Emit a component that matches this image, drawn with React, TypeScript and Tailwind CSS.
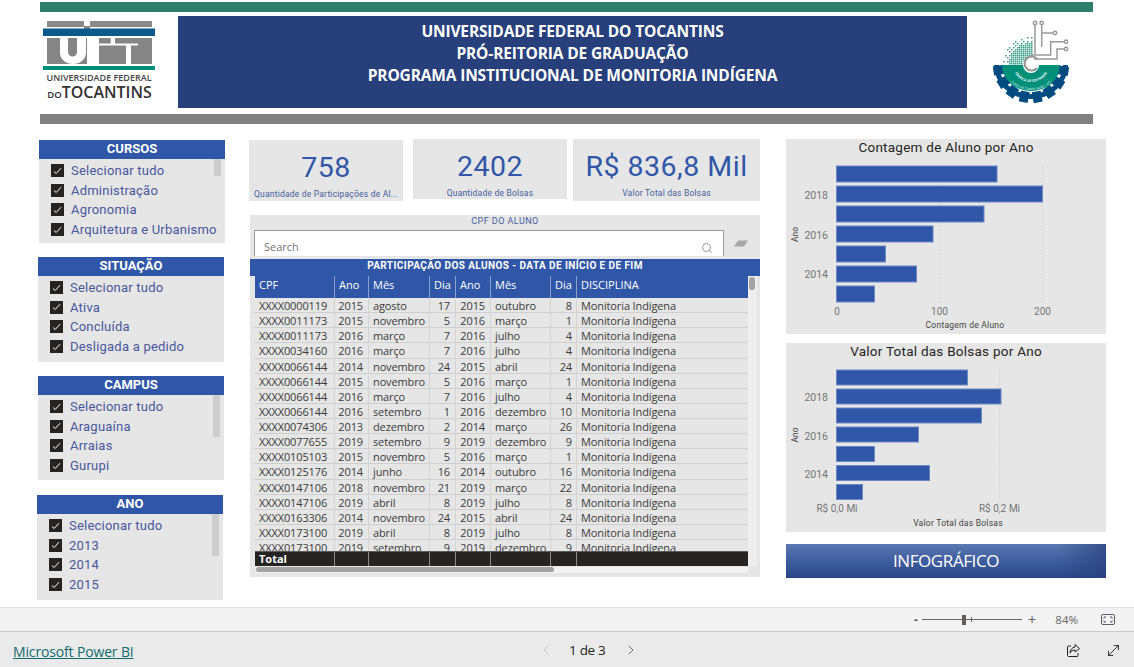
import { ChevronLeft, ChevronRight, MoveDiagonal, Search } from 'lucide-react';

const din = "font-['Roboto',sans-serif]";
const segoe = "font-['Open_Sans',sans-serif]";

type Row = [string, string, string, string, string, string, string];

const rows: Row[] = [
  ['XXXX0000119', '2015', 'agosto', '17', '2015', 'outubro', '8'],
  ['XXXX0011173', '2015', 'novembro', '5', '2016', 'março', '1'],
  ['XXXX0011173', '2016', 'março', '7', '2016', 'julho', '4'],
  ['XXXX0034160', '2016', 'março', '7', '2016', 'julho', '4'],
  ['XXXX0066144', '2014', 'novembro', '24', '2015', 'abril', '24'],
  ['XXXX0066144', '2015', 'novembro', '5', '2016', 'março', '1'],
  ['XXXX0066144', '2016', 'março', '7', '2016', 'julho', '4'],
  ['XXXX0066144', '2016', 'setembro', '1', '2016', 'dezembro', '10'],
  ['XXXX0074306', '2013', 'dezembro', '2', '2014', 'março', '26'],
  ['XXXX0077655', '2019', 'setembro', '9', '2019', 'dezembro', '9'],
  ['XXXX0105103', '2015', 'novembro', '5', '2016', 'março', '1'],
  ['XXXX0125176', '2014', 'junho', '16', '2014', 'outubro', '16'],
  ['XXXX0147106', '2018', 'novembro', '21', '2019', 'março', '22'],
  ['XXXX0147106', '2019', 'abril', '8', '2019', 'julho', '8'],
  ['XXXX0163306', '2014', 'novembro', '24', '2015', 'abril', '24'],
  ['XXXX0173100', '2019', 'abril', '8', '2019', 'julho', '8'],
  ['XXXX0173100', '2019', 'setembro', '9', '2019', 'dezembro', '9'],
];

const gridCols = 'grid grid-cols-[80px_34px_61px_26px_35px_60px_26px_171px]';

function Check() {
  return (
    <span className="w-[13px] h-[13px] bg-[#252423] flex items-center justify-center shrink-0">
      <svg width="9" height="8" viewBox="0 0 9 8" fill="none">
        <path d="M1 4.500 3.200 6.500 8 1.200" stroke="#fff" strokeWidth="1" />
      </svg>
    </span>
  );
}

function Slicer({ title, items, thumb, className }: { title: string; items: string[]; thumb?: string; className: string }) {
  return (
    <div className={`relative w-[186px] bg-[#e6e6e6] ${din} ${className}`}>
      <div className="h-[19px] bg-[#3056a8] text-white text-[13px] font-bold leading-[17px] text-center">{title}</div>
      <div className="flex flex-col pl-[12px] pt-[2px]">
        {items.map((item) => (
          <div key={item} className="h-[19.6px] flex items-center gap-[7px] text-[13px] tracking-[0.22px] text-[#46569f]">
            <Check />
            <span>{item}</span>
          </div>
        ))}
      </div>
      {thumb && <div className={`absolute right-[4px] top-[19px] w-[7px] bg-[#cdcdcd] ${thumb}`} />}
    </div>
  );
}

function Kpi({ value, label, className }: { value: string; label: string; className: string }) {
  return (
    <div className={`bg-[#e6e6e6] flex flex-col items-center ${din} ${className}`}>
      <div className="text-[28.5px] leading-[34px] mt-[11px] tracking-[0.5px] text-[#3056a8]">{value}</div>
      <div className="text-[8.5px] leading-[11px] mt-[4px] tracking-[0.2px] text-[#44609f] whitespace-nowrap">{label}</div>
    </div>
  );
}

function BarChart({
  title,
  height,
  viewBox,
  bars,
  years,
  grid,
  ticks,
  axisTitle,
  axisTitleX,
  axisTitleY,
  tickY,
  anoY,
  barH,
}: {
  title: string;
  height: number;
  viewBox: string;
  bars: { y: number; x2: number }[];
  years: { label: string; y: number }[];
  grid: number[];
  ticks: { label: string; x: number }[];
  axisTitle: string;
  axisTitleX: number;
  axisTitleY: number;
  tickY: number;
  anoY: number;
  barH: number;
}) {
  return (
    <div className={`bg-[#e6e6e6] ${din}`}>
      <div className="h-[20px] text-center text-[13.5px] leading-[16px] tracking-[0.25px] text-[#252423]">{title}</div>
      <svg width="320" height={height} viewBox={viewBox} className="block">
        {grid.map((x) => (
          <line key={x} x1={x} x2={x} y1={bars[0].y} y2={bars[6].y + barH} stroke="#c8c8c8" strokeDasharray="1 2" />
        ))}
        {bars.map((b) => (
          <rect key={b.y} x="836.5" y={b.y} width={b.x2 - 836.5} height={barH} fill="#3056a8" stroke="#6d87c2" strokeWidth="1" />
        ))}
        {years.map((t) => (
          <text key={t.label} x="828" y={t.y + 4} textAnchor="end" fontSize="10.5" fill="#757575">
            {t.label}
          </text>
        ))}
        {ticks.map((t) => (
          <text key={t.label} x={t.x} y={tickY + 4} textAnchor="middle" fontSize="10" fill="#757575">
            {t.label}
          </text>
        ))}
        <text x={axisTitleX} y={axisTitleY + 3} textAnchor="middle" fontSize="8.5" fill="#444" letterSpacing="0.25">
          {axisTitle}
        </text>
        <text x="798" y={anoY} textAnchor="middle" fontSize="8.5" fill="#444" transform={`rotate(-90 798 ${anoY})`}>
          Ano
        </text>
      </svg>
    </div>
  );
}

function UftLogo() {
  return (
    <div className="w-[112px] shrink-0 flex flex-col items-center font-['Open_Sans',sans-serif]">
      <svg width="112" height="54" viewBox="43 16 112 54" className="block">
        <rect x="47" y="21" width="37" height="6" fill="#8a8a8a" />
        <rect x="90" y="21" width="62" height="6" fill="#8a8a8a" />
        <rect x="84" y="26" width="6" height="3" fill="#8a8a8a" />
        <rect x="43" y="28.5" width="112" height="7.5" fill="#0a5a8c" />
        <rect x="47" y="38" width="105" height="26" fill="#858585" />
        <path d="M60 38h8v14a4.500 4.500 0 0 0 9 0V38h9v15a13 11 0 0 1-26 0z" fill="#fff" />
        <rect x="87" y="38" width="12" height="26" fill="#fff" />
        <rect x="99" y="43.500" width="39" height="2" fill="#fff" />
        <rect x="110.700" y="38" width="4.300" height="6" fill="#fff" />
        <rect x="126" y="45" width="5" height="19" fill="#fff" />
        <rect x="43" y="66" width="112" height="4" fill="#00907a" />
      </svg>
      <div className="mt-[1px] h-[13px] text-[9px] leading-[13px] text-[#444] font-semibold whitespace-nowrap">UNIVERSIDADE FEDERAL</div>
      <div className="h-[17px] leading-[17px] ml-[1px] text-[#333] whitespace-nowrap font-semibold">
        <span className="text-[9.5px]">DO</span>
        <span className="text-[16px]">TOCANTINS</span>
      </div>
    </div>
  );
}

function GearLogo() {
  const teeth = [10, 33, 56, 79, 102, 125, 148, 171];
  const dots: { x: number; y: number }[] = [];
  for (let x = 1001; x < 1032; x += 2) {
    for (let y = 37; y < 65; y += 2) {
      const d = Math.hypot(x - 1031, y - 65);
      if (d > 29 || d < 9) continue;
      if (d > 23 && (x + y * 3) % 4 === 0) continue;
      if (x % 6 === 1 || y % 6 === 1) dots.push({ x, y });
      else if (d < 26) dots.push({ x, y });
    }
  }
  return (
    <svg width="90" height="92" viewBox="990 16 90 92" className="block">
      {teeth.map((t) => (
        <rect key={t} x="1026.500" y="92" width="9" height="11" fill="#004b80" transform={`rotate(${t - 90} 1031 65)`} />
      ))}
      <path d="M994 65a37 34 0 0 0 74 0h-5a32 29 0 0 1-64 0z" fill="#004b80" />
      <path d="M1002 65a29 26 0 0 0 58 0h-21a8 8 0 0 1-16 0z" fill="#00907a" />
      {dots.map((d, i) => (
        <rect key={i} x={d.x} y={d.y} width="1.500" height="1.500" fill="#3a9c86" />
      ))}
      <g fill="none" stroke="#9a9a9a" strokeWidth="1.500">
        <path d="M1035 25v29" />
        <path d="M1041.700 25v22" />
        <path d="M1041.700 33h11.500" />
        <path d="M1064 41.700h-13.300V55H1031" />
        <path d="M1064 49h-7v10h-23" />
        <path d="M1037 59a7 7 0 1 0 0 9" strokeWidth="2.200" />
        <circle cx="1035" cy="23" r="1.700" />
        <circle cx="1041.700" cy="23" r="1.700" />
        <circle cx="1055" cy="33" r="1.700" />
        <circle cx="1066" cy="41.700" r="1.700" />
        <circle cx="1066" cy="49" r="1.700" />
      </g>
      <path id="gearArc1" d="M1014 68a17 14 0 0 0 34 0" fill="none" />
      <path id="gearArc2" d="M1006 70a25 20 0 0 0 50 0" fill="none" />
      <text fontSize="3.400" fontWeight="700" fill="#e8f6f2" textAnchor="middle" className="font-['Open_Sans',sans-serif]">
        <textPath href="#gearArc1" startOffset="50%">FÁBRICA DE SOFTWARE</textPath>
      </text>
      <text fontSize="3" fill="#e8f6f2" textAnchor="middle" className="font-['Open_Sans',sans-serif]">
        <textPath href="#gearArc2" startOffset="50%">CURSO DE COMPUTAÇÃO - UFT</textPath>
      </text>
    </svg>
  );
}

function Banner() {
  return (
    <div className="w-[789px] h-[92px] ml-[23px] bg-[#27407b] text-white text-center text-[15.5px] leading-[22px] font-bold pt-[4px] tracking-[-0.15px] font-['Open_Sans',sans-serif]">
      <div>UNIVERSIDADE FEDERAL DO TOCANTINS</div>
      <div>PRÓ-REITORIA DE GRADUAÇÃO</div>
      <div>PROGRAMA INSTITUCIONAL DE MONITORIA INDÍGENA</div>
    </div>
  );
}

function ParticipationTable() {
  return (
    <div className={`relative h-[362px] ml-[1px] mt-[14px] bg-[#e6e6e6] ${din}`}>
      <div className="h-[15px] text-center text-[9px] leading-[13px] tracking-[0.45px] text-[#44609f]">CPF DO ALUNO</div>
      <div className="flex items-start pl-[4px] h-[29px] overflow-hidden">
        <div className={`w-[470px] h-[26px] bg-white border border-[#999] border-b-0 flex items-end justify-between pl-[9px] pr-[10px] text-[11px] text-[#777] ${segoe}`}>
          <span className="leading-[18px]">Search</span>
          <Search size={12} className="text-[#999] mb-[2px]" />
        </div>
        <svg width="14" height="9" viewBox="0 0 14 9" className="ml-[10px] mt-[10px]">
          <path d="M4 0.500h10L10 6.500H0z" fill="#a8a8a8" />
        </svg>
      </div>
      <div className="h-[17px] bg-[#3056a8] text-white text-center text-[10px] font-bold tracking-[0.42px] leading-[14px]">
        PARTICIPAÇÃO DOS ALUNOS - DATA DE INÍCIO E DE FIM
      </div>
      <div className="pl-[5px] pr-[12px]">
        <div className={`${gridCols} h-[22px] bg-[#3056a8] text-white text-[11px] leading-[17px] ${segoe}`}>
          {['CPF', 'Ano', 'Mês', 'Dia', 'Ano', 'Mês', 'Dia', 'DISCIPLINA'].map((h, i) => (
            <div key={i} className={`px-[4px] ${i < 7 ? 'border-r border-[#8ca0cc]' : ''}`}>
              {h}
            </div>
          ))}
        </div>
        <div className={`h-[253px] overflow-hidden text-[11px] tracking-[-0.12px] text-[#3a3a3a] ${segoe}`}>
          {rows.map((r, i) => (
            <div key={i} className={`${gridCols} h-[15.13px] leading-[15px] border-b border-[#cfcfcf]`}>
              <div className="pl-[4px] border-r border-[#d4d4d4]">{r[0]}</div>
              <div className="pr-[5px] text-right border-r border-[#d4d4d4]">{r[1]}</div>
              <div className="pl-[4px] border-r border-[#d4d4d4]">{r[2]}</div>
              <div className="pr-[5px] text-right border-r border-[#d4d4d4]">{r[3]}</div>
              <div className="pr-[5px] text-right border-r border-[#d4d4d4]">{r[4]}</div>
              <div className="pl-[4px] border-r border-[#d4d4d4]">{r[5]}</div>
              <div className="pr-[4px] text-right border-r border-[#d4d4d4]">{r[6]}</div>
              <div className="pl-[4px]">Monitoria Indígena</div>
            </div>
          ))}
        </div>
        <div className={`${gridCols} h-[15px] bg-[#252423] text-white text-[11px] font-bold leading-[14px] border-t border-[#5a5a5a] ${segoe}`}>
          {['Total', '', '', '', '', '', '', ''].map((t, i) => (
            <div key={i} className={`pl-[4px] ${i < 7 ? 'border-r border-[#8a8a8a]' : ''}`}>
              {t}
            </div>
          ))}
        </div>
        <div className="h-[6px] bg-[#f2f2f2] mt-[1px]">
          <div className="w-[298px] h-[5px] ml-[1px] rounded-[3px] bg-[#a3a3a3]" />
        </div>
      </div>
      <div className="absolute left-[498px] top-[61px] w-[9px] h-[290px] bg-[#eeeeee]">
        <div className="w-[6px] h-[13px] ml-[1px] mt-[1px] rounded-[3px] bg-[#a3a3a3]" />
      </div>
    </div>
  );
}

export default function App() {
  return (
    <div className="w-[1134px] h-[667px] overflow-hidden bg-white flex flex-col">
      <div className="h-[607px] pt-[2px]">
        <div className="h-[10px] mx-[40px] w-[1053px] bg-[#2f7d6b]" />
        <div className="flex mt-[4px] pl-[43px] h-[92px]">
          <UftLogo />
          <Banner />
          <div className="ml-[23px]">
            <GearLogo />
          </div>
        </div>
        <div className="h-[10px] mt-[6px] ml-[40px] w-[1053px] bg-[#808080]" />

        <div className="flex mt-[15px]">
          {/* Slicers */}
          <div className="w-[188px] ml-[37px] pt-[1px] flex flex-col">
            <Slicer className="ml-[2px] h-[103px]" title="CURSOS" items={['Selecionar tudo', 'Administração', 'Agronomia', 'Arquitetura e Urbanismo']} thumb="h-[17px]" />
            <Slicer className="ml-[1px] mt-[14px] h-[105px]" title="SITUAÇÃO" items={['Selecionar tudo', 'Ativa', 'Concluída', 'Desligada a pedido']} />
            <Slicer className="ml-[1px] mt-[14px] h-[104px]" title="CAMPUS" items={['Selecionar tudo', 'Araguaína', 'Arraias', 'Gurupi']} thumb="h-[42px]" />
            <Slicer className="mt-[15px] h-[105px]" title="ANO" items={['Selecionar tudo', '2013', '2014', '2015']} thumb="h-[42px]" />
          </div>

          {/* KPIs and table */}
          <div className="w-[511px] ml-[24px]">
            <div className="flex items-start">
              <Kpi className="w-[154px] h-[61px] mt-[1px]" value="758" label="Quantidade de Participações de Al..." />
              <Kpi className="w-[154px] h-[60px] ml-[10px]" value="2402" label="Quantidade de Bolsas" />
              <Kpi className="w-[187px] h-[62px] ml-[6px]" value="R$ 836,8 Mil" label="Valor Total das Bolsas" />
            </div>
            <ParticipationTable />
          </div>

          {/* Charts */}
          <div className="w-[320px] ml-[26px] flex flex-col">
            <BarChart
              title="Contagem de Aluno por Ano"
              height={175}
              viewBox="786 159 320 175"
              barH={16}
              bars={[
                { y: 166, x2: 997 },
                { y: 186, x2: 1042.5 },
                { y: 206, x2: 984 },
                { y: 226, x2: 933 },
                { y: 246, x2: 885.5 },
                { y: 266, x2: 916.5 },
                { y: 286, x2: 874.5 },
              ]}
              years={[
                { label: '2018', y: 195 },
                { label: '2016', y: 234.5 },
                { label: '2014', y: 274 },
              ]}
              grid={[939.5, 1042.5]}
              ticks={[
                { label: '0', x: 837 },
                { label: '100', x: 939.5 },
                { label: '200', x: 1042.5 },
              ]}
              tickY={311}
              axisTitle="Contagem de Aluno"
              axisTitleX={965}
              axisTitleY={325}
              anoY={234.5}
            />
            <div className="mt-[9px]">
              <BarChart
                title="Valor Total das Bolsas por Ano"
                height={169}
                viewBox="786 363 320 169"
                barH={15}
                bars={[
                  { y: 370, x2: 967.5 },
                  { y: 389, x2: 1001 },
                  { y: 408, x2: 981.5 },
                  { y: 427, x2: 918.5 },
                  { y: 446.5, x2: 874.5 },
                  { y: 465.5, x2: 929.5 },
                  { y: 484.5, x2: 862.5 },
                ]}
                years={[
                  { label: '2018', y: 396.5 },
                  { label: '2016', y: 435.5 },
                  { label: '2014', y: 473.5 },
                ]}
                grid={[999.5]}
                ticks={[
                  { label: 'R$ 0,0 Mi', x: 837 },
                  { label: 'R$ 0,2 Mi', x: 999.5 },
                ]}
                tickY={508}
                axisTitle="Valor Total das Bolsas"
                axisTitleX={958}
                axisTitleY={523}
                anoY={435}
              />
            </div>
            <div className="relative mt-[12px] h-[34px] bg-linear-to-b from-[#5a77b0] via-[#3f5e9f] to-[#2b4989] border-b border-[#27407b]">
              <div className="absolute inset-0 bg-linear-to-r from-transparent from-85% to-[#27407b]/70" />
              <div className="relative h-full flex items-center justify-center text-white text-[17px] tracking-[-0.4px] font-['Open_Sans',sans-serif]">
                INFOGRÁFICO
              </div>
            </div>
          </div>
        </div>
      </div>

      {/* Zoom bar */}
      <div className="h-[24px] bg-[#f3f3f3] border-t border-[#e0e0e0] flex items-center justify-end text-[11.5px] text-[#666] font-['Open_Sans',sans-serif]">
        <span className="font-bold text-[#555] mr-[4px]">-</span>
        <div className="relative w-[100px] h-[1px] bg-[#666] mr-[6px]">
          <div className="absolute left-[40px] -top-[4px] w-[4px] h-[10px] bg-[#605e5c]" />
          <div className="absolute left-[49px] -top-[2px] w-[1px] h-[5px] bg-[#666]" />
        </div>
        <span className="text-[15px] leading-none mr-[19px]">+</span>
        <span className="mr-[23px]">84%</span>
        <svg width="14" height="11" viewBox="0 0 14 11" fill="none" stroke="#5c5c6c" strokeWidth="1" className="mr-[19px]">
          <rect x="0.500" y="0.500" width="13" height="10" rx="1.500" />
          <path d="M3 4.500V3h2M9 3h2v1.500M3 6.500V8h2M9 8h2V6.500" />
        </svg>
      </div>

      {/* Page footer */}
      <div className="flex-1 relative bg-[#eaeaea] border-t border-[#c8c8c8] flex items-center pl-[13px] pt-[4px] font-['Open_Sans',sans-serif]">
        <span className="text-[14px] tracking-[-0.15px] text-[#0f6a6e] underline">Microsoft Power BI</span>
        <div className="absolute left-[538px] top-[10px] flex items-center">
          <ChevronLeft size={16} strokeWidth={1} className="text-[#b0b0b0]" />
          <span className="ml-[15px] text-[13.5px] leading-[14px] tracking-[-0.3px] font-medium text-[#252423]">1 de 3</span>
          <ChevronRight size={16} strokeWidth={1.2} className="ml-[17px] text-[#444]" />
        </div>
        <div className="absolute right-[12px] top-[10px] flex items-center gap-[24px] text-[#252423]">
          <svg width="15" height="15" viewBox="0 0 15 15" fill="none" stroke="#252423" strokeWidth="1">
            <path d="M5 3H2.500a1 1 0 0 0-1 1v8.500a1 1 0 0 0 1 1H11a1 1 0 0 0 1-1V10" />
            <path d="M9 1.500 13.500 5.500 9 9V7C6.500 7 5 8 4 10 4 7 6 4.500 9 4z" />
          </svg>
          <MoveDiagonal size={17} strokeWidth={1.3} />
        </div>
      </div>
    </div>
  );
}
